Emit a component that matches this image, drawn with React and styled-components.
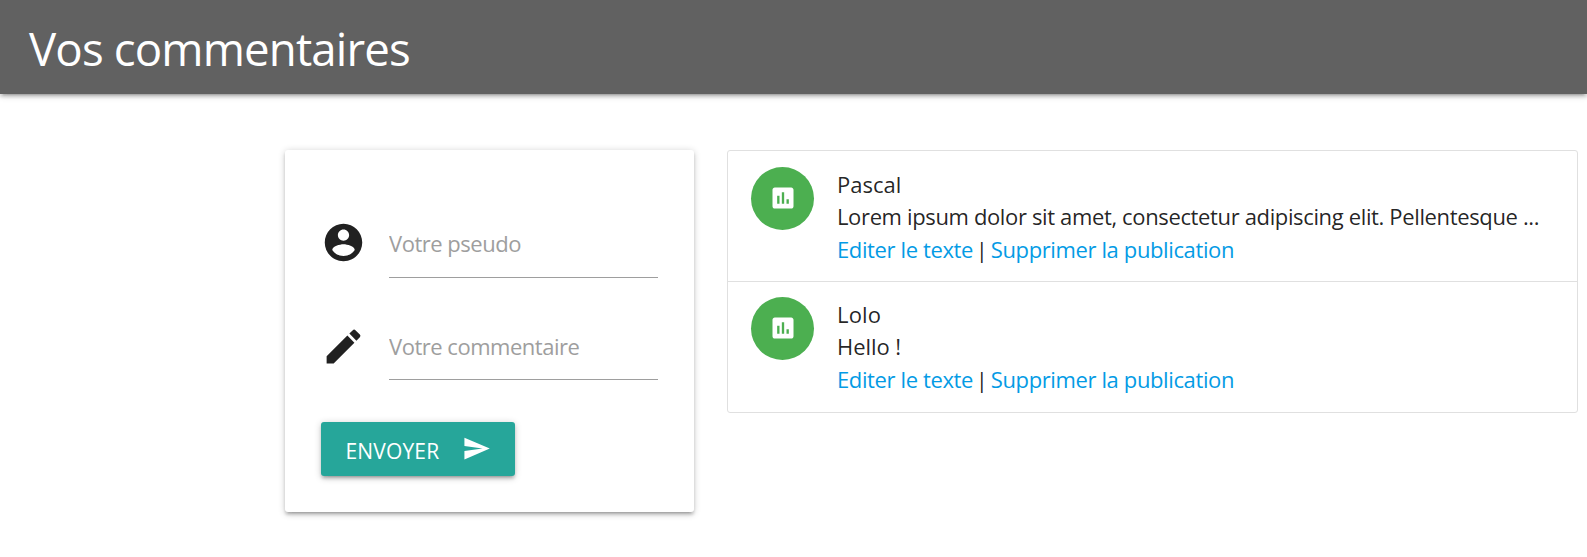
import React from "react";
import styled, { createGlobalStyle } from "styled-components";

const GlobalStyle = createGlobalStyle`
  *, *::before, *::after { box-sizing: border-box; }
  body {
    margin: 0;
    background: #fff;
    color: rgba(0, 0, 0, 0.87);
    font: 400 22px/32.5px "Open Sans", "Noto Sans", sans-serif;
  }
`;

const elevation = `
  box-shadow: 0 3px 3px 0 rgba(0, 0, 0, 0.14), 0 4.5px 1.5px -3px rgba(0, 0, 0, 0.12),
    0 1.5px 7.5px 0 rgba(0, 0, 0, 0.2);
`;

const Header = styled.header`
  display: flex;
  align-items: center;
  height: 94px;
  padding: 2px 29px 0;
  background: #616161;
  color: #fff;
  ${elevation}
`;

const Title = styled.h1`
  margin: 0;
  font-size: 45.6px;
  font-weight: 400;
  line-height: 62px;
  letter-spacing: -0.85px;
`;

const Main = styled.main`
  display: flex;
  align-items: flex-start;
  gap: 33px;
  min-height: 463px;
  padding: 56px 9px 30px 285px;
`;

const Card = styled.form`
  display: flex;
  flex-direction: column;
  align-items: flex-start;
  flex: none;
  width: 409px;
  height: 362px;
  padding: 58px 36px 36px;
  border-radius: 3px;
  background: #fff;
  ${elevation}
`;

const Field = styled.label`
  display: flex;
  width: 100%;
  height: 70px;
  margin-bottom: 32px;
  & + & { margin-bottom: 42px; }
`;

const FieldIcon = styled.svg`
  flex: none;
  width: 45px;
  height: 45px;
  margin: ${({ $top }) => $top}px 23px 0 0;
  fill: #212121;
`;

const Input = styled.input`
  flex: 1;
  min-width: 0;
  padding: ${({ $top }) => $top}px 0 0;
  border: 0;
  border-bottom: 1px solid #9e9e9e;
  outline: 0;
  background: transparent;
  font: inherit;
  letter-spacing: -0.48px;
  &::placeholder { color: #9e9e9e; opacity: 1; }
`;

const SubmitButton = styled.button`
  display: flex;
  align-items: center;
  width: 194px;
  height: 54px;
  padding: 0 22px 0 24.5px;
  border: 0;
  border-radius: 3px;
  background: #26a69a;
  color: #fff;
  font: inherit;
  font-size: 21px;
  letter-spacing: 0.15px;
  text-transform: uppercase;
  ${elevation}
`;

const SubmitLabel = styled.span`
  flex: 1;
  padding-top: 4px;
  text-align: left;
`;

const SendIcon = styled.svg`
  width: 29px;
  height: 29px;
  margin: 0 2px 1px 0;
  fill: #fff;
`;

const Collection = styled.ul`
  flex: 1;
  min-width: 0;
  margin: 0;
  padding: 0;
  border: 1px solid #e0e0e0;
  border-radius: 3px;
  list-style: none;
`;

const CollectionItem = styled.li`
  display: flex;
  gap: 23px;
  height: 130px;
  padding: 16px 30px 0 23px;
  & + & {
    height: 131px;
    border-top: 1px solid #e0e0e0;
    padding-top: 15px;
  }
`;

const Avatar = styled.span`
  display: flex;
  flex: none;
  align-items: center;
  justify-content: center;
  width: 63px;
  height: 63px;
  padding: 0 0 1px;
  border-radius: 50%;
  background: #4caf50;
`;

const AvatarIcon = styled.svg`
  width: 28px;
  height: 28px;
  fill: #fff;
`;

const Comment = styled.div`
  display: grid;
  grid-template-rows: 32px 33px 33px;
  align-content: start;
  min-width: 0;
  padding-top: 1px;
`;

const Line = styled.p`
  margin: 0;
  white-space: pre;
  letter-spacing: ${({ $tracking }) => $tracking || "0"};
`;

const Link = styled.a`
  color: #039be5;
  text-decoration: none;
  letter-spacing: -0.38px;
`;

const Separator = styled.span`
  margin: 0 1px 0 -1px;
  letter-spacing: -1.9px;
`;

const comments = [
  {
    author: "Pascal",
    authorTracking: "0px",
    text: "Lorem ipsum dolor sit amet, consectetur adipiscing elit. Pellentesque ...",
    textTracking: "-0.36px",
  },
  { author: "Lolo", authorTracking: "0.2px", text: "Hello !", textTracking: "-0.05px" },
];

export default function App() {
  return (
    <>
      <GlobalStyle />
      <Header>
        <Title>Vos commentaires</Title>
      </Header>
      <Main>
        <Card>
          <Field>
            <FieldIcon $top={12} viewBox="0 0 24 24">
              <path d="M12 2C6.48 2 2 6.48 2 12s4.48 10 10 10 10-4.48 10-10S17.52 2 12 2zm0 3c1.66 0 3 1.34 3 3s-1.34 3-3 3-3-1.34-3-3 1.34-3 3-3zm0 14.2c-2.5 0-4.71-1.28-6-3.22.03-1.99 4-3.08 6-3.08 1.99 0 5.97 1.09 6 3.08-1.29 1.94-3.5 3.22-6 3.22z" />
            </FieldIcon>
            <Input $top={2} placeholder="Votre pseudo" />
          </Field>
          <Field>
            <FieldIcon $top={14} viewBox="0 0 24 24">
              <path d="M3 17.25V21h3.75L17.81 9.94l-3.75-3.75L3 17.25zM20.71 7.04c.39-.39.39-1.02 0-1.41l-2.34-2.34c-.39-.39-1.02-.39-1.41 0l-1.83 1.83 3.75 3.75 1.83-1.83z" />
            </FieldIcon>
            <Input $top={4} placeholder="Votre commentaire" />
          </Field>
          <SubmitButton type="button">
            <SubmitLabel>Envoyer</SubmitLabel>
            <SendIcon viewBox="0 0 24 24">
              <path d="M2.01 21L23 12 2.01 3 2 10l15 2-15 2z" />
            </SendIcon>
          </SubmitButton>
        </Card>
        <Collection>
          {comments.map((c) => (
            <CollectionItem key={c.author}>
              <Avatar>
                <AvatarIcon viewBox="0 0 24 24">
                  <path d="M19 3H5c-1.1 0-2 .9-2 2v14c0 1.1.9 2 2 2h14c1.1 0 2-.9 2-2V5c0-1.1-.9-2-2-2zM9 17H7v-7h2v7zm4 0h-2V7h2v10zm4 0h-2v-4h2v4z" />
                </AvatarIcon>
              </Avatar>
              <Comment>
                <Line $tracking={c.authorTracking}>{c.author}</Line>
                <Line $tracking={c.textTracking}>{c.text}</Line>
                <Line>
                  <Link>Editer le texte</Link>
                  <Separator>{" | "}</Separator>
                  <Link>Supprimer la publication</Link>
                </Line>
              </Comment>
            </CollectionItem>
          ))}
        </Collection>
      </Main>
    </>
  );
}
